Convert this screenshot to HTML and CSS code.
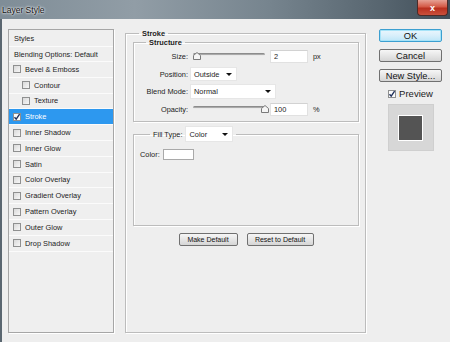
FILE: index.html
```html
<!DOCTYPE html>
<html lang="en">
<head>
  <meta charset="UTF-8">
  <meta name="viewport" content="width=device-width, initial-scale=1.0">
  <link rel="stylesheet" href="styles.css">
  <title>Layer Style</title>
</head>
<body>
  <div class="titlebar">
    <span class="title">Layer Style</span>
    <a href="#" class="close-btn">x</a>
  </div>
  <div class="window">
    <!-- styles list -->
    <ul class="styles-list">
      <li class="head first">Styles</li>
      <li class="head">Blending Options: Default</li>
      <li><span class="check"></span>Bevel &amp; Emboss</li>
      <li class="sub"><span class="check"></span>Contour</li>
      <li class="sub"><span class="check"></span>Texture</li>
      <li class="active"><span class="check checked"><svg width="8" height="8" viewBox="0 0 8 8"><path d="M1.5 4.2 L3.2 6.2 L6.6 1.2" fill="none" stroke="#1f2f5a" stroke-width="1.4"/></svg></span>Stroke</li>
      <li><span class="check"></span>Inner Shadow</li>
      <li><span class="check"></span>Inner Glow</li>
      <li><span class="check"></span>Satin</li>
      <li><span class="check"></span>Color Overlay</li>
      <li><span class="check"></span>Gradient Overlay</li>
      <li><span class="check"></span>Pattern Overlay</li>
      <li><span class="check"></span>Outer Glow</li>
      <li><span class="check"></span>Drop Shadow</li>
    </ul>

    <!-- settings -->
    <fieldset class="group stroke">
      <legend>Stroke</legend>
      <fieldset class="group structure">
        <legend>Structure</legend>
        <div class="field">
          <label>Size:</label>
          <div class="slider"><div class="track"></div><span class="thumb thumb-min"><svg width="8" height="8" viewBox="0 0 8 8"><polygon points="0.5,7.5 0.5,3.5 4,0.5 7.5,3.5 7.5,7.5" fill="#f5f5f5" stroke="#7a7a7a"/></svg></span></div>
          <input type="text" class="num" value="2">
          <span class="unit">px</span>
        </div>
        <div class="field">
          <label>Position:</label>
          <div class="select pos">Outside</div>
        </div>
        <div class="field">
          <label>Blend Mode:</label>
          <div class="select blend">Normal</div>
        </div>
        <div class="field">
          <label>Opacity:</label>
          <div class="slider"><div class="track"></div><span class="thumb thumb-max"><svg width="8" height="8" viewBox="0 0 8 8"><polygon points="0.5,7.5 0.5,3.5 4,0.5 7.5,3.5 7.5,7.5" fill="#f5f5f5" stroke="#7a7a7a"/></svg></span></div>
          <input type="text" class="num" value="100">
          <span class="unit">%</span>
        </div>
      </fieldset>

      <fieldset class="group fill">
        <legend><span>Fill Type:</span><div class="select type">Color</div></legend>
        <div class="color-row">
          <span>Color:</span>
          <span class="swatch"></span>
        </div>
      </fieldset>

      <div class="defaults">
        <a href="#" class="btn small make">Make Default</a>
        <a href="#" class="btn small reset">Reset to Default</a>
      </div>
    </fieldset>

    <!-- dialog buttons -->
    <div class="actions">
      <a href="#" class="btn ok">OK</a>
      <a href="#" class="btn">Cancel</a>
      <a href="#" class="btn">New Style...</a>
      <div class="preview-check">
        <span class="check checked"><svg width="8" height="8" viewBox="0 0 8 8"><path d="M1.5 4.2 L3.2 6.2 L6.6 1.2" fill="none" stroke="#1f2f5a" stroke-width="1.4"/></svg></span>
        Preview
      </div>
      <div class="preview-box">
        <div class="preview-swatch"></div>
      </div>
    </div>
  </div>
</body>
</html>
```

FILE: styles.css
```css
*{
  margin: 0;
  padding: 0;
  box-sizing: border-box;
  font-family: "Liberation Sans", Arial, sans-serif;
}
body{
  width: 450px;
  height: 342px;
  overflow: hidden;
  background-color: #eeeeee;
  color: #1c1c1c;
  font-size: 7.4px;
}

/* title bar */
.titlebar{
  height: 19px;
  display: flex;
  justify-content: space-between;
  align-items: flex-start;
  background: linear-gradient(90deg, #7f8d97 0%, #919da6 30%, #76848e 60%, #57656f 85%, #404e59 100%);
}
.title{
  font-size: 8.5px;
  color: #151515;
  padding: 5px 0 0 2px;
  text-shadow: 0 0 3px #fff, 0 0 2px #fff;
}
.close-btn{
  width: 31px;
  height: 16px;
  margin-right: 2px;
  display: flex;
  justify-content: center;
  align-items: center;
  background: linear-gradient(#e6a194, #d45a47 45%, #b9301f 55%, #c9513d);
  border: 1px solid #4c2b28;
  border-top: none;
  border-radius: 0 0 4px 4px;
  color: white;
  font-weight: bold;
  font-size: 9px;
  text-decoration: none;
}

.window{
  display: flex;
  align-items: flex-start;
  height: 323px;
  padding: 10px 0 0 6px;
  border-left: 2px solid #5a6670;
}

/* styles list */
.styles-list{
  list-style: none;
  width: 106px;
  height: 304px;
  border: 1px solid #a6a6a6;
  box-shadow: 1px 1px 0 #fff;
  background-color: #efefef;
}
.styles-list li{
  height: 15.8px;
  display: flex;
  align-items: center;
  padding-left: 4px;
  border-bottom: 1px solid #fbfbfb;
}
.styles-list li.head{
  padding-left: 5px;
  height: 15px;
}
.styles-list li.first{
  height: 17px;
}
.styles-list li.sub{
  padding-left: 13px;
}
.styles-list li.active{
  background-color: #2d98ef;
  color: white;
}
.check{
  width: 8px;
  height: 8px;
  margin-right: 4px;
  border: 1px solid #8f9090;
  background: linear-gradient(135deg, #d9d9d9, #f7f7f7);
  display: flex;
  flex-shrink: 0;
}
.check.checked{
  background: #fbfbfb;
}
.check svg{
  margin: -1px;
}

/* group boxes */
.group{
  border: 1px solid #bcbcbc;
  box-shadow: 1px 1px 0 #fff, inset 1px 1px 0 #fff;
  min-width: 0;
}
.group legend{
  font-weight: bold;
  line-height: 9px;
  padding: 0 3px;
}
.stroke{
  width: 241px;
  height: 304px;
  margin-left: 11px;
  padding: 0 6px 0 7px;
}
.stroke > legend{
  margin-left: 6px;
}
.structure{
  padding: 2px 0 4px 0;
}
.structure > legend{
  margin-left: 12px;
}

.field{
  display: flex;
  align-items: center;
  height: 15px;
  margin-bottom: 2.5px;
}
.field:last-child{
  margin-bottom: 0;
}
.field label{
  width: 54px;
  text-align: right;
  margin-right: 2px;
}

.slider{
  width: 72px;
  height: 15px;
  margin-left: 3px;
  position: relative;
}
.track{
  height: 3px;
  margin-top: 4px;
  border-radius: 2px;
  background: linear-gradient(#7d7d7d, #b9b9b9);
  border-bottom: 1px solid #e9e9e9;
}
.thumb{
  position: absolute;
  top: 3px;
  display: flex;
}
.thumb-min{
  left: 0;
}
.thumb-max{
  left: 68px;
}

.num{
  width: 38px;
  height: 13px;
  margin-left: 5px;
  border: 1px solid #e1e1e1;
  border-top-color: #d2d2d2;
  background-color: white;
  padding-left: 3px;
  font-size: 7.4px;
  color: #1c1c1c;
  outline: none;
}
.unit{
  margin-left: 5px;
}

.select{
  height: 14px;
  display: flex;
  justify-content: space-between;
  align-items: center;
  background-color: white;
  border: 1px solid #e6e6e6;
  padding: 0 4px 0 3px;
}
.select::after{
  content: '';
  border-left: 3px solid transparent;
  border-right: 3px solid transparent;
  border-top: 3px solid #111;
}
.select.pos{
  width: 47px;
}
.select.blend{
  width: 86px;
  height: 15px;
}

.fill{
  margin-top: 4.5px;
  height: 100px;
  padding: 7px 0 0 6px;
}
.fill > legend{
  margin-left: 10px;
  display: flex;
  align-items: center;
  font-weight: normal;
  line-height: normal;
}
.select.type{
  width: 48px;
  height: 16px;
  margin-left: 3px;
  font-weight: normal;
}
.color-row{
  display: flex;
  align-items: center;
  height: 11px;
}
.swatch{
  width: 31px;
  height: 11px;
  margin-left: 3px;
  border: 1px solid #a9a9a9;
  background-color: white;
}

/* buttons */
.btn{
  display: flex;
  justify-content: center;
  align-items: center;
  width: 63px;
  height: 13px;
  border: 1px solid #707070;
  border-radius: 2px;
  background: linear-gradient(#f6f6f6, #e6e6e6 50%, #d5d5d5);
  color: #111;
  font-size: 9.3px;
  text-decoration: none;
  margin-bottom: 7px;
}
.btn.ok{
  border-color: #3c9fd0;
  box-shadow: inset 0 0 0 1px #a6e3f8;
  background: linear-gradient(#eaf6fd, #d8effb 50%, #bee6f8);
}
.defaults{
  display: flex;
  justify-content: center;
  gap: 9px;
  margin-top: 7px;
}
.btn.small{
  font-size: 7px;
  margin-bottom: 0;
}
.btn.make{
  width: 59px;
}
.btn.reset{
  width: 67px;
}

.actions{
  width: 63px;
  margin-left: 13px;
  display: flex;
  flex-direction: column;
  align-items: center;
}
.preview-check{
  display: flex;
  align-items: center;
  font-size: 9.5px;
  margin-top: -1px;
  height: 11px;
}
.preview-check .check{
  margin-right: 3px;
}
.preview-box{
  width: 46px;
  height: 47px;
  margin-top: 5px;
  background-color: #d7d7d7;
  border: 1px solid #cfcfcf;
  display: flex;
  justify-content: center;
  align-items: center;
}
.preview-swatch{
  width: 25px;
  height: 26px;
  background-color: #545454;
  border: 1px solid white;
}
```
